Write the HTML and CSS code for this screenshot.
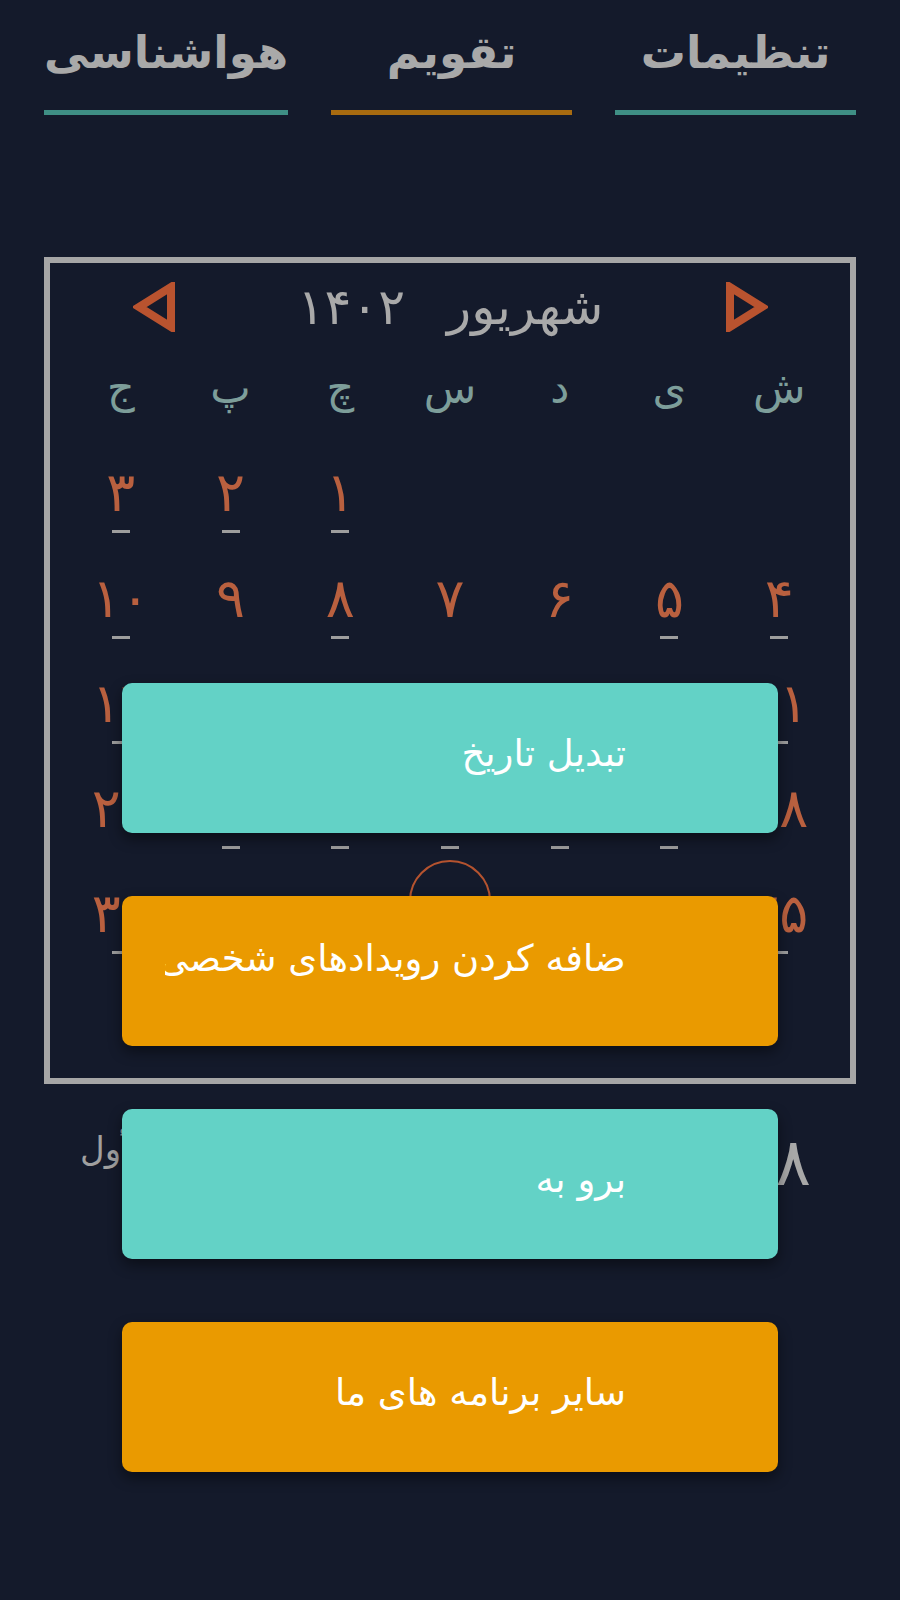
FILE: index.html
```html
<!DOCTYPE html>
<html lang="fa" dir="ltr">
<head>
<meta charset="utf-8">
<title>تقویم</title>
<link rel="stylesheet" href="styles.css">
</head>
<body>
<nav class="tabs">
  <div class="tab"><div class="tab-label">تنظیمات</div><div class="tab-line"></div></div>
  <div class="tab tab--active"><div class="tab-label">تقویم</div><div class="tab-line"></div></div>
  <div class="tab"><div class="tab-label">هواشناسی</div><div class="tab-line"></div></div>
</nav>

<section class="calendar">
  <div class="cal-head">
    <svg class="arrow" viewBox="0 0 44 50" width="44" height="50"><polygon points="6,5 6,45 38,25"/></svg>
    <div class="cal-title"><span>شهریور</span><span>۱۴۰۲</span></div>
    <svg class="arrow" viewBox="0 0 44 50" width="44" height="50"><polygon points="38,5 38,45 6,25"/></svg>
  </div>
  <div class="grid">
    <div class="wd">ش</div><div class="wd">ی</div><div class="wd">د</div><div class="wd">س</div><div class="wd">چ</div><div class="wd">پ</div><div class="wd">ج</div>

    <div class="day"></div><div class="day"></div><div class="day"></div><div class="day"></div>
    <div class="day"><span class="num">۱</span><i class="dash"></i></div>
    <div class="day"><span class="num">۲</span><i class="dash"></i></div>
    <div class="day"><span class="num">۳</span><i class="dash"></i></div>

    <div class="day"><span class="num">۴</span><i class="dash"></i></div>
    <div class="day"><span class="num">۵</span><i class="dash"></i></div>
    <div class="day"><span class="num">۶</span></div>
    <div class="day"><span class="num">۷</span></div>
    <div class="day"><span class="num">۸</span><i class="dash"></i></div>
    <div class="day"><span class="num">۹</span></div>
    <div class="day"><span class="num">۱۰</span><i class="dash"></i></div>

    <div class="day"><span class="num">۱۱</span><i class="dash"></i></div>
    <div class="day"><span class="num">۱۲</span><i class="dash"></i></div>
    <div class="day"><span class="num">۱۳</span><i class="dash"></i></div>
    <div class="day"><span class="num">۱۴</span><i class="dash"></i></div>
    <div class="day"><span class="num">۱۵</span><i class="dash"></i></div>
    <div class="day"><span class="num">۱۶</span><i class="dash"></i></div>
    <div class="day"><span class="num">۱۷</span><i class="dash"></i></div>

    <div class="day"><span class="num">۱۸</span><i class="dash dash--none"></i></div>
    <div class="day"><span class="num">۱۹</span><i class="dash"></i></div>
    <div class="day"><span class="num">۲۰</span><i class="dash"></i></div>
    <div class="day"><span class="num">۲۱</span><i class="dash"></i></div>
    <div class="day"><span class="num">۲۲</span><i class="dash"></i></div>
    <div class="day"><span class="num">۲۳</span><i class="dash"></i></div>
    <div class="day"><span class="num">۲۴</span><i class="dash dash--none"></i></div>

    <div class="day"><span class="num">۲۵</span><i class="dash"></i></div>
    <div class="day"><span class="num">۲۶</span><i class="dash"></i></div>
    <div class="day"><span class="num">۲۷</span><i class="dash"></i></div>
    <div class="day day--today"><span class="num">۲۸</span><i class="dash"></i></div>
    <div class="day"><span class="num">۲۹</span><i class="dash"></i></div>
    <div class="day"><span class="num">۳۰</span><i class="dash"></i></div>
    <div class="day"><span class="num">۳۱</span><i class="dash"></i></div>
  </div>
</section>

<div class="today-info">
  <div class="today-big">۲۸</div>
  <div class="today-hijri">۱۲ ربیع‌الأول</div>
</div>

<div class="menu">
  <div class="menu-btn teal"><span class="menu-label">تبدیل تاریخ</span></div>
  <div class="menu-btn orange menu-btn--raised"><span class="menu-label menu-label--long">اضافه کردن رویدادهای شخصی</span></div>
  <div class="menu-btn teal"><span class="menu-label">برو به</span></div>
  <div class="menu-btn orange"><span class="menu-label">سایر برنامه های ما</span></div>
</div>
</body>
</html>
```

FILE: styles.css
```css
html, body {
  margin: 0;
  padding: 0;
}
body {
  width: 900px;
  height: 1600px;
  background: #141a2b;
  font-family: "DejaVu Sans", sans-serif;
  position: relative;
  overflow: hidden;
}

/* Tabs */
.tabs {
  display: flex;
  direction: rtl;
  gap: 43px;
  padding: 0 44px;
}
.tab {
  flex: 1;
  display: flex;
  flex-direction: column;
}
.tab-label {
  height: 104px;
  padding-bottom: 6px;
  display: flex;
  align-items: center;
  justify-content: center;
  color: #a9a9a9;
  font-size: 45px;
  font-weight: bold;
}
.tab-line {
  height: 5px;
  background: #3f8f85;
}
.tab--active .tab-line {
  background: #a86b10;
}

/* Calendar box */
.calendar {
  box-sizing: border-box;
  margin: 142px 44px 0;
  height: 827px;
  border: 6px solid #a6a6a6;
}
.cal-head {
  direction: rtl;
  display: flex;
  justify-content: space-between;
  align-items: center;
  height: 50px;
  margin: 19px 82px 0 83px;
}
.arrow polygon {
  fill: none;
  stroke: #b9532f;
  stroke-width: 8;
  stroke-linejoin: miter;
}
.cal-title {
  display: flex;
  gap: 42px;
  color: #a9a9a9;
  font-size: 50px;
  line-height: 50px;
}
.grid {
  direction: rtl;
  display: grid;
  grid-template-columns: repeat(7, 1fr);
  grid-auto-rows: 105.3px;
  padding: 0 16px;
  margin-top: 3px;
}
.wd {
  display: flex;
  align-items: center;
  justify-content: center;
  color: #7d9e9a;
  font-size: 43px;
}
.day {
  position: relative;
  display: flex;
  flex-direction: column;
  align-items: center;
}
.num {
  display: block;
  padding-top: 16px;
  height: 74px;
  line-height: 74px;
  color: #b9603f;
  font-size: 54px;
}
.dash {
  display: block;
  width: 18px;
  height: 3px;
  background: #9e9e9e;
}
.dash--none {
  visibility: hidden;
}
.day--today::before {
  content: "";
  position: absolute;
  top: -1px;
  left: 50%;
  width: 78px;
  height: 78px;
  margin-left: -41px;
  border: 2px solid #b5532f;
  border-radius: 50%;
}

/* Below calendar */
.today-info {
  direction: rtl;
  display: flex;
  justify-content: space-between;
  align-items: center;
  padding: 0 89px 0 80px;
  margin-top: 40px;
}
.today-big {
  color: #a8a8a8;
  font-size: 66px;
}
.today-hijri {
  color: #a0a0a0;
  font-size: 34px;
  margin-bottom: 28px;
}

/* Overlay menu */
.menu {
  position: absolute;
  top: 683px;
  left: 122px;
  width: 656px;
  display: flex;
  flex-direction: column;
  gap: 63px;
}
.menu-btn {
  box-sizing: border-box;
  height: 150px;
  border-radius: 10px;
  box-shadow: 0 6px 14px rgba(0, 0, 0, 0.45);
  direction: rtl;
  display: flex;
  align-items: center;
  padding-right: 152px;
  padding-bottom: 10px;
  color: #ffffff;
  font-size: 37px;
}
.menu-btn--raised {
  padding-bottom: 26px;
}
.teal {
  background: #63d2c6;
}
.orange {
  background: #ea9a00;
}
.menu-label {
  display: block;
  width: 461px;
  overflow: hidden;
  white-space: nowrap;
}
.menu-label--long {
  text-indent: -10px;
}
```
